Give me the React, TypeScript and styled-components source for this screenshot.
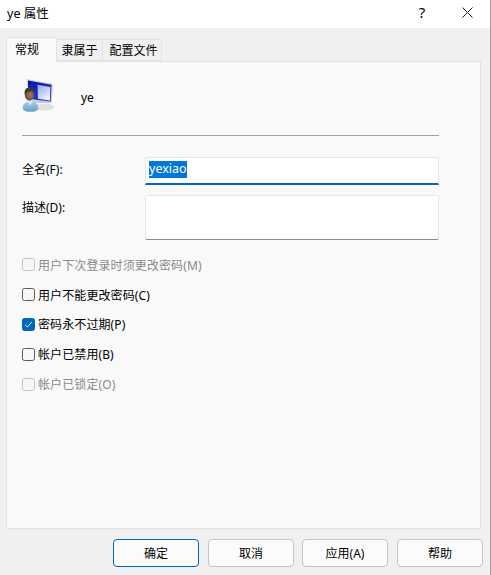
import React from "react";
import styled, { createGlobalStyle } from "styled-components";

const Global = createGlobalStyle`
  html, body { margin: 0; padding: 0; background: #f0f0f0; }
  * { box-sizing: border-box; }
  body { font-family: "Noto Sans", "Noto Sans CJK SC", sans-serif; font-size: 12px; color: #000; }
`;

const Window = styled.div`
  width: 491px;
  height: 575px;
  display: flex;
  flex-direction: column;
  background: #f0f0f0;
  border-right: 1px solid #a0a0a0;
  overflow: hidden;
`;

const TitleBar = styled.header`
  height: 28px;
  flex: none;
  background: #fff;
  display: flex;
  align-items: center;
  padding: 0 0 4px 7px;
`;

const Title = styled.div`
  flex: 1;
  font-size: 12.5px;
`;

const CaptionButton = styled.div`
  width: 46px;
  display: flex;
  justify-content: center;
  align-items: center;
  line-height: 1;
`;

const Help = styled(CaptionButton)`
  margin-right: -1px;
  font-size: 15px;
`;

const Body = styled.main`
  flex: 1;
  display: flex;
  flex-direction: column;
  padding: 9px 10px 8px 6px;
`;

const TabStrip = styled.div`
  height: 24px;
  flex: none;
  display: flex;
  align-items: flex-end;
  position: relative;
  z-index: 1;
`;

const Tab = styled.div<{ $active?: boolean; $w: number; $shift?: number }>`
  width: ${(p) => p.$w}px;
  height: ${(p) => (p.$active ? 25 : 22)}px;
  margin-bottom: ${(p) => (p.$active ? -1 : 0)}px;
  background: ${(p) => (p.$active ? "#f9f9f9" : "#f0f0f0")};
  border: 1px solid #e3e3e3;
  border-bottom: ${(p) => (p.$active ? "none" : "1px solid #e3e3e3")};
  border-left: ${(p) => (p.$active ? "1px solid #e3e3e3" : "none")};
  display: flex;
  justify-content: center;
  align-items: center;
  padding-bottom: ${(p) => (p.$active ? 3 : 0)}px;
  padding-left: ${(p) => Math.max(p.$shift ?? 0, 0)}px;
  padding-right: ${(p) => Math.max(-(p.$shift ?? 0), 0)}px;
  font-size: 12px;
`;

const Panel = styled.section`
  height: 468px;
  width: 475px;
  background: #f9f9f9;
  border: 1px solid #e3e3e3;
  padding: 16px 41px 0 15px;
  display: flex;
  flex-direction: column;
`;

const UserRow = styled.div`
  height: 58px;
  display: flex;
  align-items: flex-start;
  border-bottom: 1px solid #a0a0a0;
`;

const UserIcon = styled.svg`
  width: 34px;
  height: 34px;
  flex: none;
`;

const UserName = styled.div`
  margin: 12px 0 0 25px;
  font-size: 12px;
  line-height: 16px;
`;

const FieldRow = styled.div<{ $mt: number }>`
  display: flex;
  align-items: flex-start;
  margin-top: ${(p) => p.$mt}px;
`;

const Label = styled.div<{ $pt: number }>`
  width: 123px;
  flex: none;
  padding-top: ${(p) => p.$pt}px;
  line-height: 17px;
  font-size: 12px;
`;

const NameInput = styled.div`
  width: 294px;
  height: 28px;
  background: #fff;
  border: 1px solid #e6e6e6;
  border-bottom: 2px solid #0067c0;
  padding: 2px 0 0 3px;
  font-size: 12.5px;
  line-height: 17px;
`;

const Selected = styled.span`
  display: inline-block;
  background: #0078d7;
  color: #fff;
  height: 17px;
  line-height: 16px;
`;

const DescInput = styled.div`
  width: 294px;
  height: 45px;
  background: #fff;
  border: 1px solid #e6e6e6;
  border-bottom: 1px solid #8c8c8c;
  border-radius: 2px;
`;

const Checks = styled.div`
  margin-top: 10px;
  display: flex;
  flex-direction: column;
`;

const CheckRow = styled.div<{ $disabled?: boolean }>`
  height: 29.8px;
  display: flex;
  align-items: center;
  color: ${(p) => (p.$disabled ? "#8a8a8a" : "#000")};
  font-size: 12px;
  letter-spacing: 0.1px;
`;

const Box = styled.span<{ $checked?: boolean; $disabled?: boolean }>`
  width: 13px;
  height: 13px;
  flex: none;
  margin-right: 3px;
  border-radius: 2.5px;
  display: flex;
  align-items: center;
  justify-content: center;
  background: ${(p) => (p.$checked ? "#0067c0" : p.$disabled ? "#f6f6f6" : "#f7f7f7")};
  border: 1px solid ${(p) => (p.$checked ? "#0067c0" : p.$disabled ? "#c4c4c4" : "#5c5c5c")};
`;

const Footer = styled.footer`
  display: flex;
  justify-content: flex-end;
  gap: 9px;
  margin-top: 10px;
  margin-right: -3px;
`;

const Button = styled.div<{ $primary?: boolean; $tight?: boolean }>`
  width: 86px;
  height: 28px;
  margin-right: ${(p) => (p.$tight ? -1 : 0)}px;
  background: #fbfbfb;
  border-radius: 4px;
  border: 1px solid ${(p) => (p.$primary ? "#0067c0" : "#c4c4c4")};
  display: flex;
  align-items: center;
  justify-content: center;
  font-size: 12px;
`;

const UserGlyph = () => (
  <UserIcon viewBox="0 0 34 34">
    <defs>
      <linearGradient id="scr" x1="0" y1="0" x2="0.3" y2="1">
        <stop offset="0" stopColor="#0a14a0" />
        <stop offset="1" stopColor="#1f3cd0" />
      </linearGradient>
      <linearGradient id="glass" x1="0" y1="0" x2="0.6" y2="1">
        <stop offset="0" stopColor="#8fa6ea" />
        <stop offset="1" stopColor="#eef2fc" />
      </linearGradient>
      <linearGradient id="body" x1="0" y1="0" x2="0" y2="1">
        <stop offset="0" stopColor="#a8d0e8" />
        <stop offset="1" stopColor="#6a9fc6" />
      </linearGradient>
      <radialGradient id="face" cx="0.55" cy="0.55" r="0.6">
        <stop offset="0" stopColor="#a47a58" />
        <stop offset="1" stopColor="#5e4431" />
      </radialGradient>
    </defs>
    <ellipse cx="22" cy="29" rx="10" ry="3.5" fill="#d9d9d9" opacity="0.8" />
    <path d="M4.7 1 L30.7 6 L29.7 25 L8 25 Z" fill="#c9ccd2" />
    <path d="M6 2.4 L29.5 6.8 L28.7 23.6 L12 21.5 L6 20 Z" fill="url(#scr)" />
    <path d="M15.5 6.8 L28.4 9 L27.9 22.5 L16 20.8 Z" fill="url(#glass)" />
    <path d="M0.7 30 C0.7 26 3.5 23.6 8.5 23.6 C13.5 23.6 16.3 26 16.3 30 C16.3 33 12.5 33.8 8.5 33.8 C4.5 33.8 0.7 33 0.7 30 Z" fill="url(#body)" />
    <path d="M5 23.6 L8 27 L11 23.6 L9.5 21 L6.5 21 Z" fill="#d6e8f3" />
    <ellipse cx="7.5" cy="16.5" rx="4.8" ry="6.2" fill="url(#face)" />
    <path d="M2.6 16 C2.2 11.5 4.6 9.5 7.6 9.5 C10.6 9.5 12.8 11.5 12.5 15 C10.8 13.2 8 13 6 13.7 C4.6 14.2 3.8 15 2.6 16 Z" fill="#3c3a36" />
  </UserIcon>
);

const CheckItem = ({ label, checked, disabled }: { label: string; checked?: boolean; disabled?: boolean }) => (
  <CheckRow $disabled={disabled}>
    <Box $checked={checked} $disabled={disabled}>
      {checked && (
        <svg width="9" height="9" viewBox="0 0 9 9">
          <path d="M1.2 4.8 L3.5 7 L7.8 2" fill="none" stroke="#fff" strokeWidth="0.9" />
        </svg>
      )}
    </Box>
    {label}
  </CheckRow>
);

export default function App() {
  return (
    <>
      <Global />
      <Window>
        <TitleBar>
          <Title>ye 属性</Title>
          <Help>?</Help>
          <CaptionButton>
            <svg width="11" height="11" viewBox="0 0 11 11">
              <path d="M0.5 0.5 L10.5 10.5 M10.5 0.5 L0.5 10.5" stroke="#222" strokeWidth="1" fill="none" />
            </svg>
          </CaptionButton>
        </TitleBar>
        <Body>
          <TabStrip>
            <Tab $active $w={51} $shift={-9}>常规</Tab>
            <Tab $w={46}>隶属于</Tab>
            <Tab $w={59} $shift={3}>配置文件</Tab>
          </TabStrip>
          <Panel>
            <UserRow>
              <UserGlyph />
              <UserName>ye</UserName>
            </UserRow>
            <FieldRow $mt={21}>
              <Label $pt={4}>全名(F):</Label>
              <NameInput>
                <Selected>yexiao</Selected>
              </NameInput>
            </FieldRow>
            <FieldRow $mt={10}>
              <Label $pt={4}>描述(D):</Label>
              <DescInput />
            </FieldRow>
            <Checks>
              <CheckItem label="用户下次登录时须更改密码(M)" disabled />
              <CheckItem label="用户不能更改密码(C)" />
              <CheckItem label="密码永不过期(P)" checked />
              <CheckItem label="帐户已禁用(B)" />
              <CheckItem label="帐户已锁定(O)" disabled />
            </Checks>
          </Panel>
          <Footer>
            <Button $primary>确定</Button>
            <Button $tight>取消</Button>
            <Button>应用(A)</Button>
            <Button>帮助</Button>
          </Footer>
        </Body>
      </Window>
    </>
  );
}
